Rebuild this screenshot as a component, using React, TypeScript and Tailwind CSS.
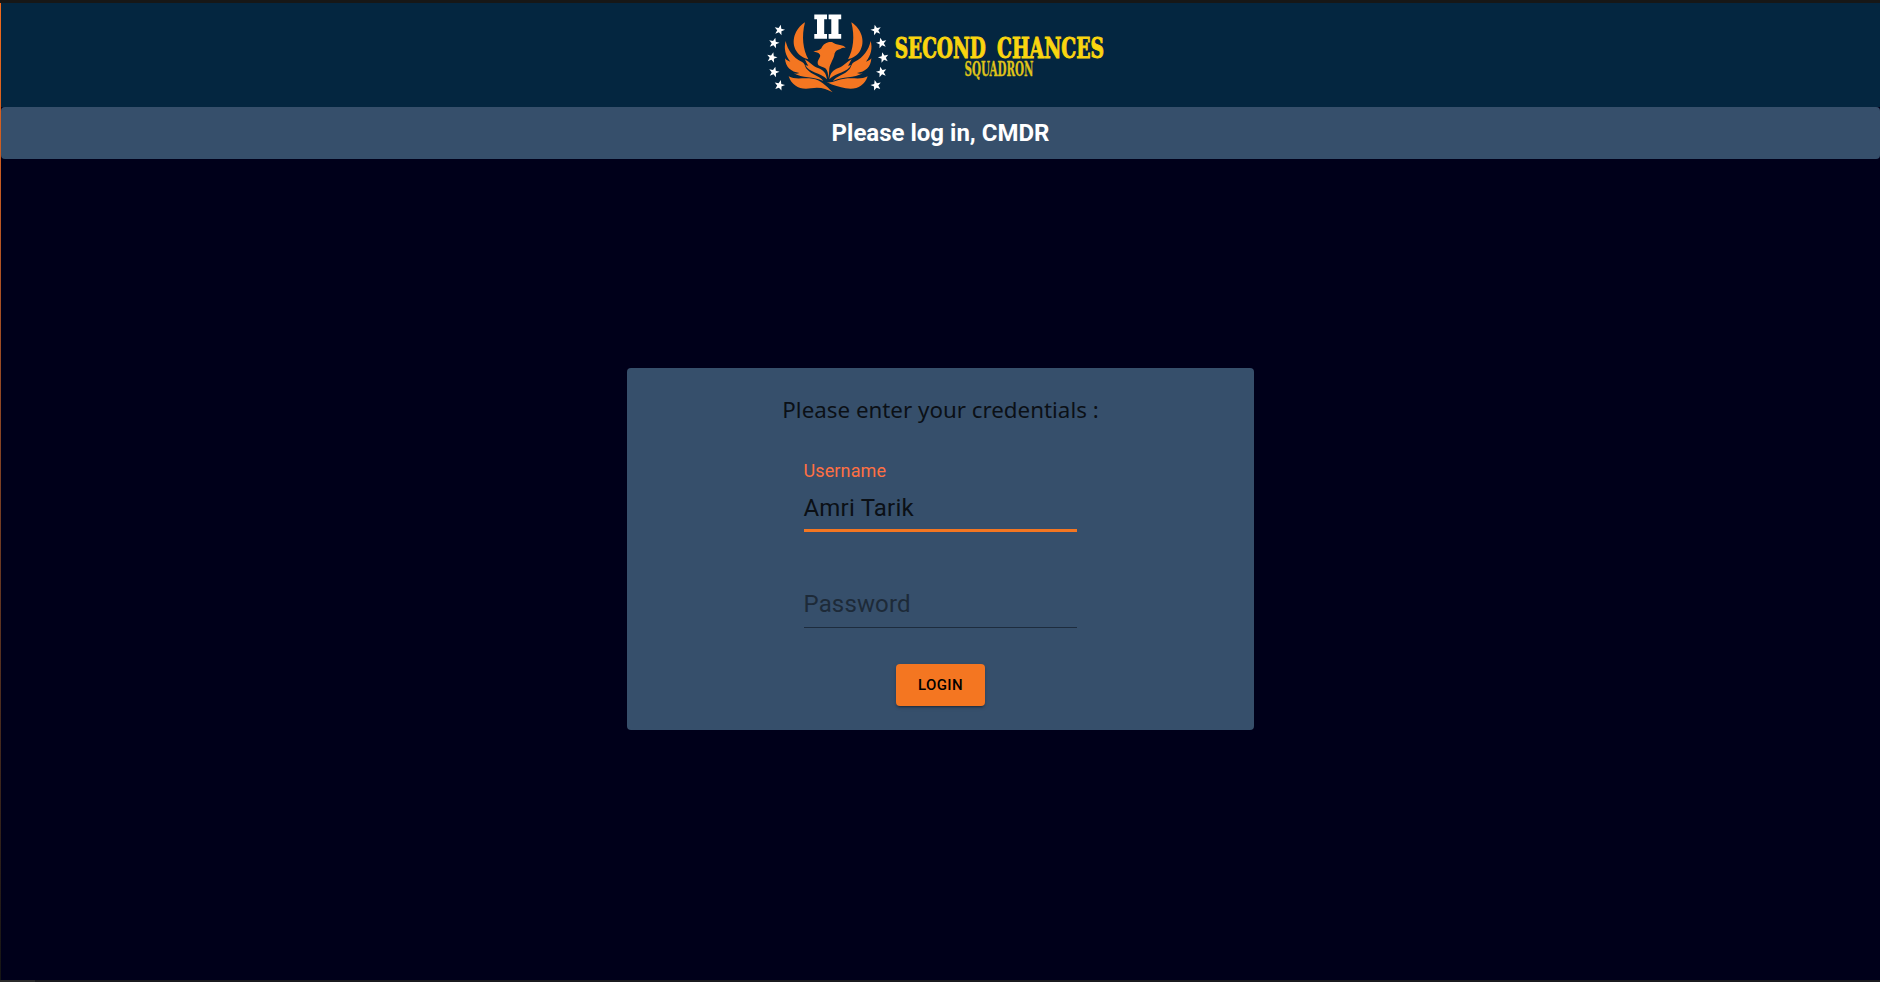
import React from "react";

const STARS: [number, number][] = [
  [779.5, 30], [774, 43], [772, 57.5], [774, 72], [779.5, 85.3],
  [876, 30], [881.5, 43], [883.5, 57.5], [881.5, 72], [876, 85.3],
];

function Wing() {
  return (
    <>
      <path d="M135 67C104 86 92 126 109 153C118 168 132 174 145 178C129 149 124 110 135 67Z" />
      <path d="M77 123C71 145 76 166 91 185C84 183 79 180 75 175C76 201 93 216 118 219C112 222 107 222 101 220C126 235 161 229 190 243C180 229 154 224 141 208C133 198 136 190 125 185C98 172 83 150 77 123Z" />
      <path d="M134 178C140 187 139 190 145 197C142 197 139 196 136 195C145 219 182 216 201 238C198 218 190 210 174 204C158 199 148 184 134 178Z" />
    </>
  );
}

function Logo() {
  return (
    <svg width="370" height="104" viewBox="760 3 370 104" className="block overflow-visible" role="img" aria-label="Second Chances Squadron">
      <g fill="#fff">
        {STARS.map(([x, y], i) => (
          <path
            key={i}
            transform={`translate(${x} ${y}) rotate(${x < 827 ? 14 : -14})`}
            d="M0-5.5L1.4-1.7L5.3-1.6L2.2.8L3.2 4.6L0 2.4L-3.2 4.6L-2.2.8L-5.3-1.6L-1.4-1.7Z"
          />
        ))}
        <path d="M814.3 14.5H827V19.3H824.2V34H827V38.7H814.3V34H817V19.3H814.3ZM828.6 14.5H841.2V19.3H838.5V34H841.2V38.7H828.6V34H831.3V19.3H828.6Z" />
      </g>
      <g fill="#f47621" transform="translate(760 0) scale(.33333)">
        <Wing />
        <g transform="translate(409 0) scale(-1 1)">
          <Wing />
        </g>
        <path d="M160 153C169 154 178 151 184 145C189 131 203 124 216 126C222 130 230 134 240 135C249 136 255 139 257 145C251 142 246 144 241 147C231 149 227 153 224 160C222 177 211 189 208 205Q207 220 206 235C204 222 203 211 196 205C189 198 173 201 173 188C173 178 183 172 180 164C176 157 168 158 160 153Z" />
        <path d="M86 229C104 240 130 232 157 236C181 239 199 257 218 277C198 266 179 260 153 265C122 271 96 259 86 229Z" />
        <path d="M323 229C304 240 280 232 253 236C235 238 218 249 201 247C221 258 239 261 257 265C288 271 313 259 323 229Z" />
      </g>
      <g fontFamily="'DejaVu Serif Condensed', 'DejaVu Serif', serif" fontWeight="700" fill="#fad50f" stroke="#fad50f" strokeWidth="0.9">
        <text x="894.8" y="58" fontSize="27" textLength="91" lengthAdjust="spacingAndGlyphs">SECOND</text>
        <text x="997" y="58" fontSize="27" textLength="107" lengthAdjust="spacingAndGlyphs">CHANCES</text>
        <text x="964.5" y="75.8" fontSize="19.5" textLength="69" lengthAdjust="spacingAndGlyphs" fill="#dfc21a" stroke="#dfc21a" strokeWidth="0.3">SQUADRON</text>
      </g>
    </svg>
  );
}

export default function App() {
  return (
    <div className="flex h-[982px] w-full flex-col overflow-hidden bg-[#00001a] font-['Roboto',sans-serif]">
      <div className="h-[3px] shrink-0 bg-[#171717]" />
      <div className="flex min-h-0 flex-1">
        <div className="w-px shrink-0 bg-linear-to-b from-[#f26a1b] to-[#151515]" />
        <div className="flex min-w-0 flex-1 flex-col">
          <header className="flex h-[104px] shrink-0 bg-[#042640] pl-[759px]">
            <Logo />
          </header>
          <div className="flex h-[52px] shrink-0 items-center justify-center rounded bg-[#364f6b]">
            <h1 className="text-[24px] leading-8 font-bold text-white">Please log in, CMDR</h1>
          </div>
          <main className="flex flex-1 flex-col items-center pt-[209px]">
            <form className="flex h-[362px] w-[627px] flex-col items-center rounded bg-[#364f6b] pt-[26px]">
              <p className="text-[22.35px] leading-8 text-[#0b1016] font-['Noto_Sans',sans-serif]">Please enter your credentials :</p>
              <div className="mt-[33px] mr-px w-[273px]">
                <label className="block text-[18px] leading-6 tracking-[0.12px] text-[#ff7043]">Username</label>
                <div className="mt-[7px] h-[42px] border-b-3 border-[#f47621] text-[24px] leading-9 tracking-[0.2px] text-[#0b1016]">Amri Tarik</div>
              </div>
              <div className="mt-[54px] mr-px h-[42px] w-[273px] border-b border-[#1d2c3e] text-[24px] leading-9 tracking-[0.15px] text-[#1d2a38]">Password</div>
              <button type="button" className="mt-[36px] h-[42px] w-[89px] rounded bg-[#f47621] text-[15px] font-medium tracking-[0.4px] text-black shadow-[0_3px_1px_-2px_rgba(0,0,0,0.2),0_2px_2px_0_rgba(0,0,0,0.14),0_1px_5px_0_rgba(0,0,0,0.12)]">LOGIN</button>
            </form>
          </main>
        </div>
      </div>
      <div className="flex h-[2px] shrink-0 bg-[#1b1b1f]">
        <div className="w-[35px] bg-[#2b2b2b]" />
      </div>
    </div>
  );
}
